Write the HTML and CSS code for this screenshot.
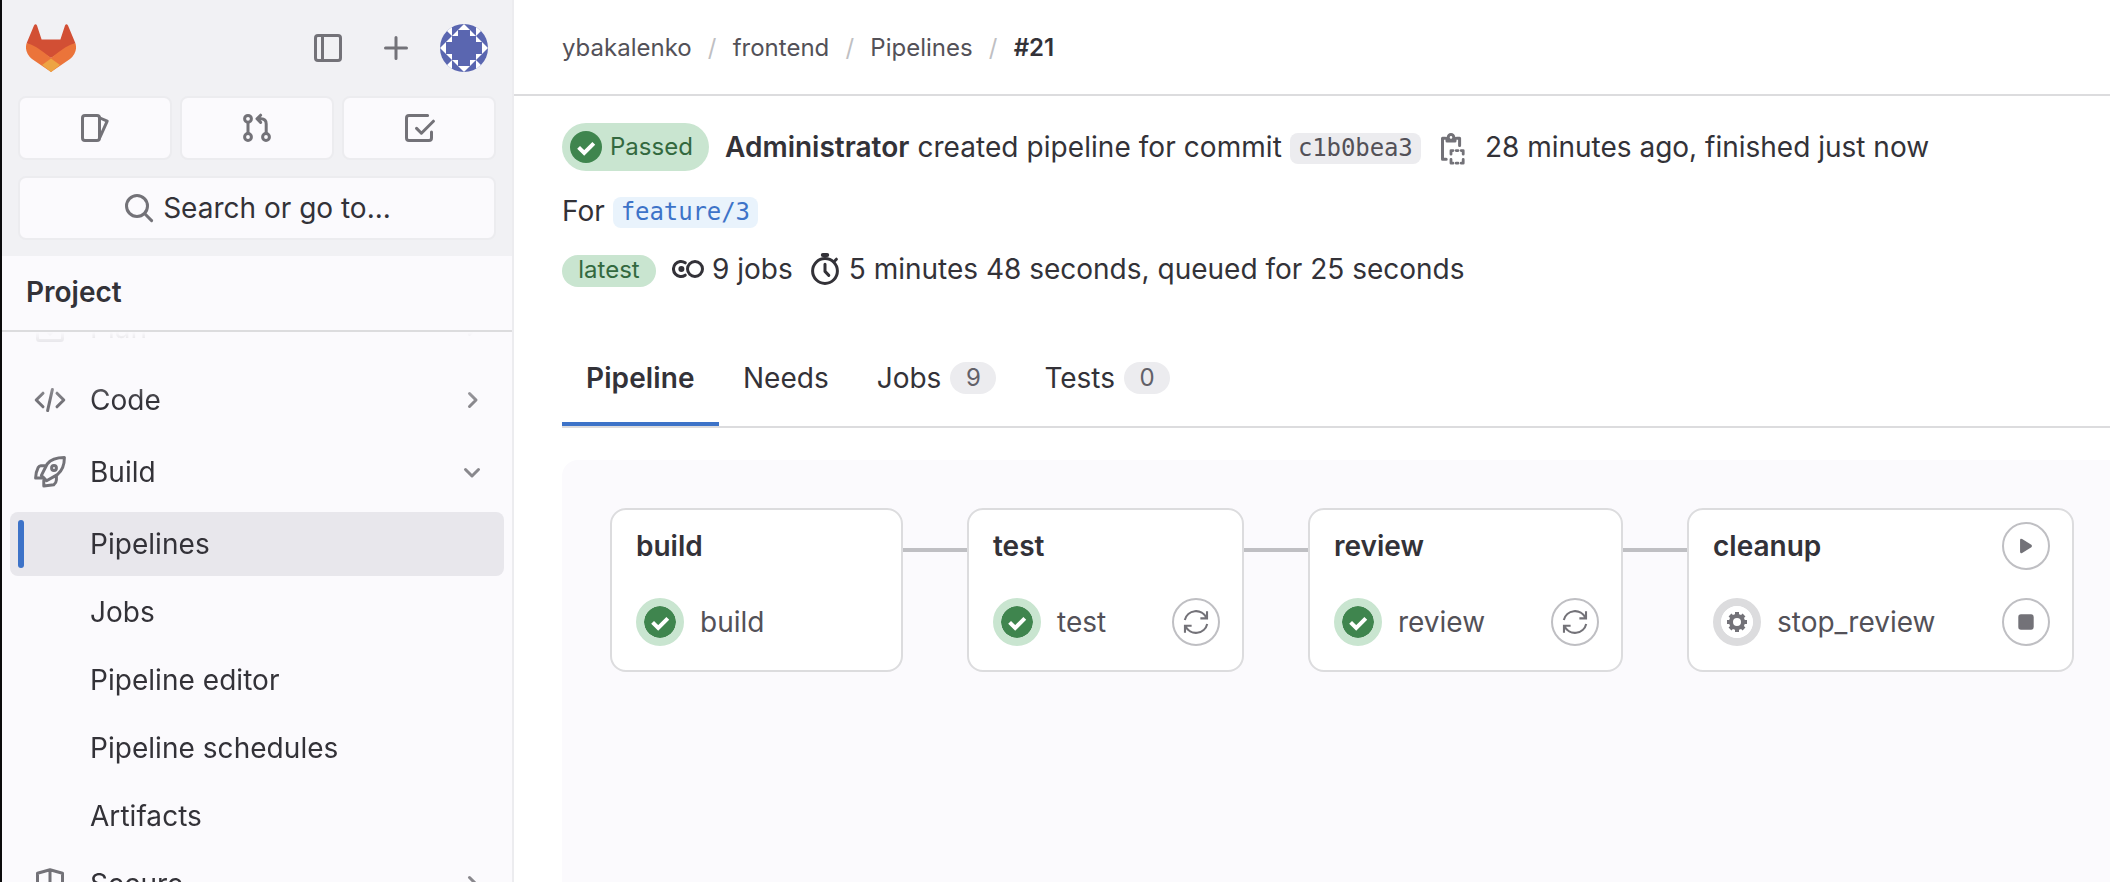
FILE: index.html
```
<!DOCTYPE html>
<html lang="en">
<head>
<meta charset="utf-8">
<title>Pipeline #21</title>
<link rel="stylesheet" href="styles.css">
</head>
<body>
<svg class="defs" width="0" height="0">
  <symbol id="check" viewBox="0 0 16 16"><circle cx="8" cy="8" r="8" class="ok"/><path d="M4.3 8.2 7.1 11 11.9 6.2" fill="none" stroke="#fff" stroke-width="2"/></symbol>
  <symbol id="right" viewBox="0 0 16 16"><path d="M6.75 4.75 10 8 6.75 11.25"/></symbol>
  <symbol id="down" viewBox="0 0 16 16"><path d="M4.75 6.75 8 10 11.25 6.75"/></symbol>
  <symbol id="retry" viewBox="0 0 16 16"><path d="M1.6 6.9A6.6 6.6 0 0 1 14 5.6M14.3 1.9V5.9H10.5M14.4 9.1A6.6 6.6 0 0 1 2 10.4M1.7 14.1V10.1H5.5"/></symbol>
</svg>
<div class="app">
  <aside class="sidebar">
    <div class="top">
      <div class="brand">
        <svg class="logo" viewBox="0 0 50 48"><path fill="#d24f34" d="M.6 19.2 8 1.5Q9.6-1.2 11 1.5L15.6 15.6H34.4L39 1.5Q40.4-1.2 42 1.5L49.4 19.2 25 34Z"/><path fill="#eb743a" d="M.6 19.2Q8 20 25 34 42 20 49.4 19.2 52 28 44 35L25 48 6 35Q-2 28 .6 19.2Z"/><path fill="#eda443" d="M16 41 25 34.4 34 41 25 48Z"/></svg>
        <svg class="i" viewBox="0 0 16 16"><rect x="1.75" y="1.75" width="12.5" height="12.5" rx="1.25"/><path d="M5.25 2V14"/></svg>
        <svg class="i" viewBox="0 0 16 16"><path d="M8 2.75V13.25M2.75 8H13.25"/></svg>
        <svg class="avatar" viewBox="0 0 48 48"><defs><clipPath id="av"><circle cx="24" cy="24" r="24"/></clipPath></defs><g clip-path="url(#av)"><path fill="#5a66b0" d="M0 0H48V48H0Z"/><path fill="#fff" d="M24 0 48 24 24 48 0 24ZM12 12 6 6 12 0ZM36 12 42 6 36 0ZM12 36 6 42 12 48ZM36 36 42 42 36 48Z"/><path fill="#5a66b0" d="M18 6H30V12H36V18H42V30H36V36H30V42H18V36H12V30H6V18H12V12H18Z"/></g></svg>
      </div>
      <div class="counters">
        <a><svg class="i" viewBox="0 0 16 16"><rect x="1.75" y="1.75" width="8.5" height="12.5" rx="1.25"/><path d="M10.5 3 14.1 4.6 10.5 12.6"/></svg></a>
        <a><svg class="i" viewBox="0 0 16 16"><circle cx="3.5" cy="3.4" r="1.7"/><circle cx="3.5" cy="12.5" r="1.7"/><circle cx="12.5" cy="12.5" r="1.7"/><path d="M3.5 5.2V10.8M12.6 10.8V6Q12.6 3.4 10 3.4H8.4M9.8 1.6 8 3.4 9.8 5.2"/></svg></a>
        <a><svg class="i" viewBox="0 0 16 16"><path d="M12.3 1.75H3Q1.75 1.75 1.75 3V13Q1.75 14.25 3 14.25H13Q14.25 14.25 14.25 13V10M6.8 8.2 9.2 10.6 15.2 4.6"/></svg></a>
      </div>
      <div class="search"><svg class="i" viewBox="0 0 16 16"><circle cx="7" cy="7" r="5.25"/><path d="M10.9 10.9 14.3 14.3"/></svg><span>Search or go to...</span></div>
    </div>
    <div class="context"><b>Project</b></div>
    <nav class="nav">
      <div class="item plan"><svg class="i" viewBox="0 0 16 16"><rect x="1.75" y="1.75" width="12.5" height="12.5" rx="1"/><path d="M5.5 8.5 8 11 11 8"/></svg><span>Plan</span><svg class="i chev"><use href="#right"/></svg></div>
      <div class="item"><svg class="i" viewBox="0 0 16 16"><path d="M4.5 4.6 1.1 8 4.5 11.4M11.5 4.6 14.9 8 11.5 11.4M9.2 2.7 6.8 13.3"/></svg><span>Code</span><svg class="i chev"><use href="#right"/></svg></div>
      <div class="item"><svg class="i" viewBox="0 0 16 16"><path d="M15.2.8C11.5.8 8.5 1.6 6.6 4L3.7 9.7 6.3 12.4 11.7 9.3C14.4 7.2 15.2 4.2 15.2.8ZM6 4.9H3.4Q2.6 4.9 2.1 5.8 1 7.8.8 11H4M4.9 12.2V15L9.9 14.4Q11.1 13.6 11.2 12V9.8"/><circle cx="10" cy="6" r="1.2"/></svg><span>Build</span><svg class="i chev"><use href="#down"/></svg></div>
      <div class="sub">
        <div class="item active"><span>Pipelines</span></div>
        <div class="item"><span>Jobs</span></div>
        <div class="item"><span>Pipeline editor</span></div>
        <div class="item"><span>Pipeline schedules</span></div>
        <div class="item"><span>Artifacts</span></div>
      </div>
      <div class="item"><svg class="i" viewBox="0 0 16 16"><path d="M1.75 2.6 8 .9 14.25 2.6V8Q14 12.5 8 15 2 12.5 1.75 8ZM8 1V15"/></svg><span>Secure</span><svg class="i chev"><use href="#right"/></svg></div>
    </nav>
  </aside>
  <main>
    <header class="crumbs"><span>ybakalenko</span><i>/</i><span>frontend</span><i>/</i><span>Pipelines</span><i>/</i><b>#21</b></header>
    <section class="content">
      <div class="row r1">
        <span class="badge passed"><svg><use href="#check"/></svg><span>Passed</span></span>
        <b>Administrator</b><span class="t-created">created pipeline for commit</span>
        <code class="sha">c1b0bea3</code>
        <svg class="i clip" viewBox="0 0 16 16"><path d="M4.2 2.6H2.75V13.1H4.6M9.8 2.6H11.3V6.2"/><circle cx="7" cy="2.2" r="1.4"/><path d="M5 2.6V4H9V2.6"/><path d="M7 10.6V8.8H8M9.6 8.8H10.5M12.1 8.8H13.1V10.6M7 13.2V15.1H8M9.6 15.1H10.5M12.1 15.1H13.1V13.2" stroke-width="1.4"/></svg>
        <span>28 minutes ago, finished just now</span>
      </div>
      <div class="row r2"><span>For</span><code class="ref">feature/3</code></div>
      <div class="row r3"><span class="badge latest">latest</span>
        <svg class="i dark pipe" viewBox="0 0 16 16"><circle cx="11.5" cy="8" r="3.75"/><path d="M6.6 4.9A3.75 3.75 0 1 0 6.6 11.1"/><circle cx="4.7" cy="8" r="1.5" class="dot"/></svg><span class="t-jobs">9 jobs</span>
        <svg class="i dark timer" viewBox="0 0 16 16"><circle cx="8" cy="9" r="6.2"/><path d="M8 5.6V9.2L9.9 11.2M12.7 4.1 13.7 3.1"/><path d="M6.9 1H9.1" stroke-width="2"/></svg><span class="t-dur">5 minutes 48 seconds, queued for 25 seconds</span>
      </div>
      <div class="tabs">
        <div class="tab on"><b>Pipeline</b></div><div class="tab"><span>Needs</span></div>
        <div class="tab"><span>Jobs</span><em>9</em></div><div class="tab"><span>Tests</span><em>0</em></div>
      </div>
      <div class="graph">
        <div class="card c1"><div class="line"><b>build</b></div><div class="line job"><svg class="st"><use href="#check"/></svg><span>build</span></div></div>
        <div class="link"></div>
        <div class="card c2"><div class="line"><b>test</b></div><div class="line job"><svg class="st"><use href="#check"/></svg><span>test</span><a class="btn"><svg><use href="#retry"/></svg></a></div></div>
        <div class="link"></div>
        <div class="card c3"><div class="line"><b>review</b></div><div class="line job"><svg class="st"><use href="#check"/></svg><span>review</span><a class="btn"><svg><use href="#retry"/></svg></a></div></div>
        <div class="link"></div>
        <div class="card c4"><div class="line"><b>cleanup</b><a class="btn"><svg viewBox="0 0 24 24"><path class="f" d="M6.9 7V17Q7 18.9 8.7 17.9L16.6 13Q17.8 12 16.6 11L8.7 6.1Q7 5.1 6.9 7Z"/></svg></a></div><div class="line job"><svg class="st manual" viewBox="0 0 32 32"><circle cx="16" cy="16" r="16" fill="#fff"/><circle cx="16" cy="16" r="6" fill="none" stroke="#737278" stroke-width="4"/><path stroke="#737278" stroke-width="4" d="M16 6V9M16 23V26M6 16H9M23 16H26M9 9 11 11M21 21 23 23M9 23 11 21M21 11 23 9"/></svg><span>stop_review</span><a class="btn"><svg viewBox="0 0 24 24"><rect class="f" x="5.4" y="5.4" width="13.2" height="13.2" rx="2.3"/></svg></a></div></div>
      </div>
    </section>
  </main>
</div>
</body>
</html>
```
FILE: styles.css
```
* { box-sizing: border-box; }
body { margin: 0; background: #fff; color: #333238; font: 28px/40px Inter, "Liberation Sans", sans-serif; overflow: hidden; }
b { font-weight: 600; }
svg { display: block; flex: none; }
.defs { position: absolute; }
.ok { fill: #3f854e; }
.i { width: 32px; height: 32px; fill: none; stroke: #737278; stroke-width: 1.5; stroke-linejoin: round; stroke-linecap: round; }
.dark { stroke: #333238; }
.dot { fill: #333238; stroke: none; }
.app { display: flex; height: 882px; white-space: nowrap; overflow: hidden; }
.sidebar { width: 514px; flex: none; border-left: 2px solid #0b0b0c; border-right: 2px solid #ececef; background: #fbfafd; display: flex; flex-direction: column; }
.top { height: 256px; flex: none; background: #f1f1f4; padding: 24px 16px 16px; }
.brand { display: flex; align-items: center; height: 48px; padding: 0 8px; }
.logo { width: 50px; height: 48px; margin-right: 236px; }
.brand .i + .i { margin-left: 36px; }
.avatar { width: 48px; height: 48px; margin-left: 28px; }
.counters { display: flex; gap: 8px; margin-top: 24px; }
.counters a, .search { height: 64px; flex: 1; display: flex; align-items: center; justify-content: center; background: #fbfafd; border: 2px solid #ececef; border-radius: 8px; }
.search { margin-top: 16px; gap: 8px; }
.context { height: 76px; flex: none; border-bottom: 2px solid #dcdcde; padding: 16px 24px; }
.nav { flex: 1; overflow: hidden; padding: 0 8px; -webkit-mask-image: linear-gradient(transparent, rgba(0, 0, 0, .16) 12px, #000 70px); mask-image: linear-gradient(transparent, rgba(0, 0, 0, .16) 12px, #000 70px); }
.item { height: 64px; margin-bottom: 8px; padding: 0 16px 0 24px; display: flex; align-items: center; }
.item > span { margin-left: 24px; margin-right: auto; letter-spacing: .04px; }
.plan { margin-top: -36px; }
.chev { stroke: #89888d; }
.sub .item { margin-bottom: 4px; border-radius: 8px; padding-left: 56px; }
.sub .active { background: #e8e7ec; padding-left: 8px; }
.active::before { content: ""; width: 6px; height: 48px; border-radius: 3px; background: #3d73c8; margin-right: 42px; }
main { flex: 1; min-width: 0; }
.crumbs { height: 96px; border-bottom: 2px solid #dcdcde; padding: 2px 48px 0; display: flex; align-items: center; font-size: 24px; color: #535158; }
.crumbs i { font-style: normal; color: #bfbfc3; margin: 0 16.2px; }
.crumbs b { color: #333238; }
.content { padding: 27px 0 0 48px; }
.row { display: flex; align-items: center; }
.badge { display: flex; align-items: center; background: #c9e5d0; color: #33693f; font-size: 24px; border-radius: 24px; }
.passed { width: 147px; height: 48px; padding-left: 8px; gap: 8px; margin-right: 16px; }
.passed svg { width: 32px; height: 32px; }
.t-created { margin-left: 8px; letter-spacing: .06px; }
code { font: 24px/31px "DejaVu Sans Mono", monospace; letter-spacing: -.1px; border-radius: 8px; padding: 0 8px; height: 31px; margin-top: 3px; }
.sha { width: 131px; background: #ececef; color: #535158; margin-left: 8px; }
.clip { margin: 4px 16px 0; }
.r2 { height: 40px; margin-top: 20px; }
.ref { width: 145px; margin-left: 8px; background: #e9f3fc; color: #3d73c8; }
.r3 { height: 32px; margin-top: 24px; }
.r3 .i, .t-jobs, .t-dur { margin-bottom: 4px; }
.latest { width: 94px; height: 32px; justify-content: center; padding-bottom: 2px; margin-right: 16px; }
.t-jobs { margin-left: 8px; margin-right: 16px; }
.t-dur { margin-left: 8px; }
.tabs { display: flex; height: 98px; margin-top: 43px; border-bottom: 2px solid #dcdcde; }
.tab { height: 96px; padding: 0 24px; display: flex; align-items: center; }
.on { width: 157px; border-bottom: 4px solid #3d73c8; padding-top: 4px; letter-spacing: .1px; }
.tab em { font-style: normal; font-size: 24px; line-height: 32px; background: #ececef; color: #626168; border-radius: 16px; margin-left: 9px; width: 46px; text-align: center; }
.graph { height: 440px; margin-top: 32px; background: #fbfafd; border-radius: 16px 0 0 0; padding: 48px; display: flex; }
.card { height: 164px; flex: none; background: #fff; border: 2px solid #dcdcde; border-radius: 16px; padding: 12px 22px 0 24px; }
.c1 { width: 293px; } .c2 { width: 277px; } .c3 { width: 315px; } .c4 { width: 387px; }
.link { width: 64px; height: 4px; flex: none; background: #bfbfc3; margin-top: 40px; }
.line { height: 48px; display: flex; align-items: center; }
.job { margin-top: 28px; color: #535158; }
.st { width: 48px; height: 48px; border: 8px solid #c9e5d0; border-radius: 50%; margin-right: 16px; }
.manual { border-color: #dcdcde; }
.btn { margin-left: auto; width: 48px; height: 48px; border: 2px solid #bfbfc3; border-radius: 50%; display: flex; align-items: center; justify-content: center; }
.btn svg { width: 28px; height: 28px; fill: none; stroke: #737278; stroke-width: 1.2; }
.btn .f { fill: #737278; stroke: none; }
```
